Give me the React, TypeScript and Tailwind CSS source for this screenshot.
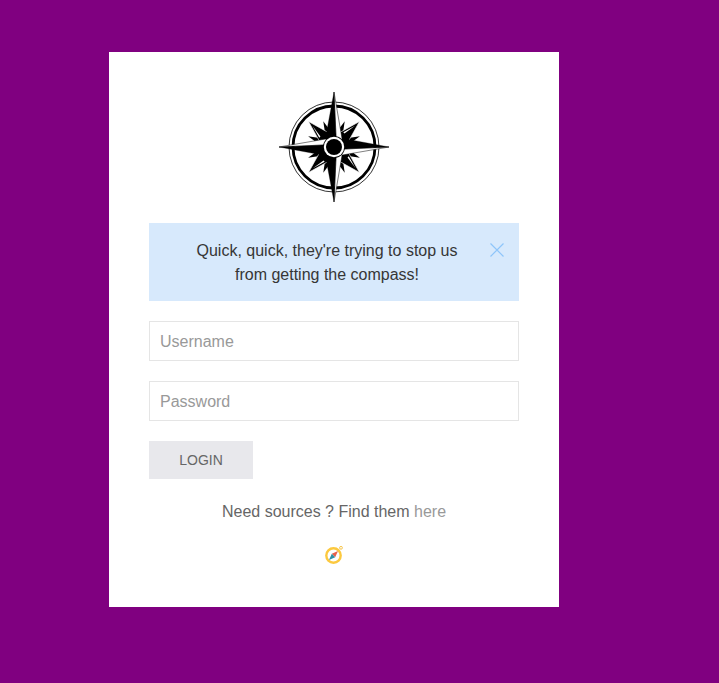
const smallRays = [22.5, 67.5, 112.5, 157.5, 202.5, 247.5, 292.5, 337.5];
const diagonalRays = [45, 135, 225, 315];

// black half and white half of each long point, written out since top and bottom are not rotations of each other
const mainPoints = [
  { black: "M55 0 L46.5 46 L55 55 L57 44 Z", white: "M55 0 L63 46.5 L55 55 L57 44 Z" },
  { black: "M110 55 L64 46.5 L55 55 L66 57 Z", white: "M110 55 L63.5 63 L55 55 L66 57 Z" },
  { black: "M55 110 L46.5 64 L55 55 L57 66 Z", white: "M55 110 L63 63.5 L55 55 L57 66 Z" },
  { black: "M0 55 L46 63.5 L55 55 L44 53 Z", white: "M0 55 L46.5 47 L55 55 L44 53 Z" },
];

function CompassLogo() {
  return (
    <svg viewBox="0 0 110 110" className="block h-[110px] w-[110px]">
      <circle cx="55" cy="55" r="45" fill="none" stroke="#000" strokeWidth="0.8" />
      <circle cx="55" cy="55" r="41" fill="none" stroke="#000" strokeWidth="2.8" />
      {smallRays.map((angle) => (
        <g key={angle} transform={`rotate(${angle} 55 55)`}>
          <path d="M55 27 L51 43 L55 50 L59 43 Z" fill="#000" />
        </g>
      ))}
      {diagonalRays.map((angle) => (
        <g key={angle} transform={`rotate(${angle} 55 55)`}>
          <path d="M55 19 L49 40 L55 50 L61 40 Z" fill="#000" stroke="#fff" strokeWidth="0.6" />
          <path d="M54.8 25 L51.2 38 L52.8 38 Z" fill="#fff" />
        </g>
      ))}
      {mainPoints.map((point) => (
        <g key={point.black}>
          <path d={point.white} fill="#fff" stroke="#000" strokeWidth="0.5" />
          <path d={point.black} fill="#000" stroke="#000" strokeWidth="0.3" />
        </g>
      ))}
      <circle cx="55" cy="55" r="11" fill="#000" />
      <circle cx="55" cy="55" r="10.2" fill="#fff" />
      <circle cx="55" cy="55" r="8" fill="#000" />
    </svg>
  );
}

function CompassEmoji() {
  return (
    <svg viewBox="0 0 20 20" className="block h-5 w-5">
      <circle cx="17" cy="2.8" r="1.4" fill="#fff" stroke="#f7c64f" strokeWidth="1" />
      <circle cx="9.5" cy="10.5" r="7.2" fill="#fff" stroke="#fcc93f" strokeWidth="2.4" />
      <path d="M14 6 L11.2 12.2 L7.8 8.8 Z" fill="#e8604c" />
      <path d="M5 15 L7.8 8.8 L11.2 12.2 Z" fill="#2f8fa8" />
    </svg>
  );
}

export default function App() {
  return (
    <div className="min-h-screen bg-[#800080] pl-[109px] pt-[52px] font-['Liberation_Sans',Arial,sans-serif] text-base">
      <div className="flex h-[555px] w-[450px] flex-col bg-white px-10 pt-10">
        <div className="flex justify-center">
          <CompassLogo />
        </div>

        <div className="relative mt-[21px] h-[78px] bg-[#d7e9fc] pl-[34.5px] pr-[48.5px] pt-4 text-center leading-6 text-[#363636]">
          Quick, quick, they're trying to stop us from getting the compass!
          <button type="button" aria-label="Close" className="absolute right-[15px] top-5 text-[#8ec5fa]">
            <svg viewBox="0 0 14 14" className="block h-[14px] w-[14px]" fill="none" stroke="currentColor" strokeWidth="1.2">
              <path d="M0.5 0.5 L13.5 13.5 M13.5 0.5 L0.5 13.5" />
            </svg>
          </button>
        </div>

        <input
          type="text"
          placeholder="Username"
          className="mt-5 h-10 w-full border border-[#e5e5e5] bg-white px-2.5 pt-0.5 text-base text-[#666] outline-none placeholder:text-[#999]"
        />
        <input
          type="password"
          placeholder="Password"
          className="mt-5 h-10 w-full border border-[#e5e5e5] bg-white px-2.5 pt-0.5 text-base text-[#666] outline-none placeholder:text-[#999]"
        />

        <button
          type="button"
          className="mt-5 h-[38px] w-[104px] bg-[#e8e8ec] text-sm uppercase text-[#666]"
        >
          Login
        </button>

        <p className="mt-[21px] text-center leading-6 text-[#666]">
          Need sources ? Find them <a href="#" className="text-[#999]">here</a>
        </p>

        <div className="mt-[21px] flex justify-center">
          <CompassEmoji />
        </div>
      </div>
    </div>
  );
}
